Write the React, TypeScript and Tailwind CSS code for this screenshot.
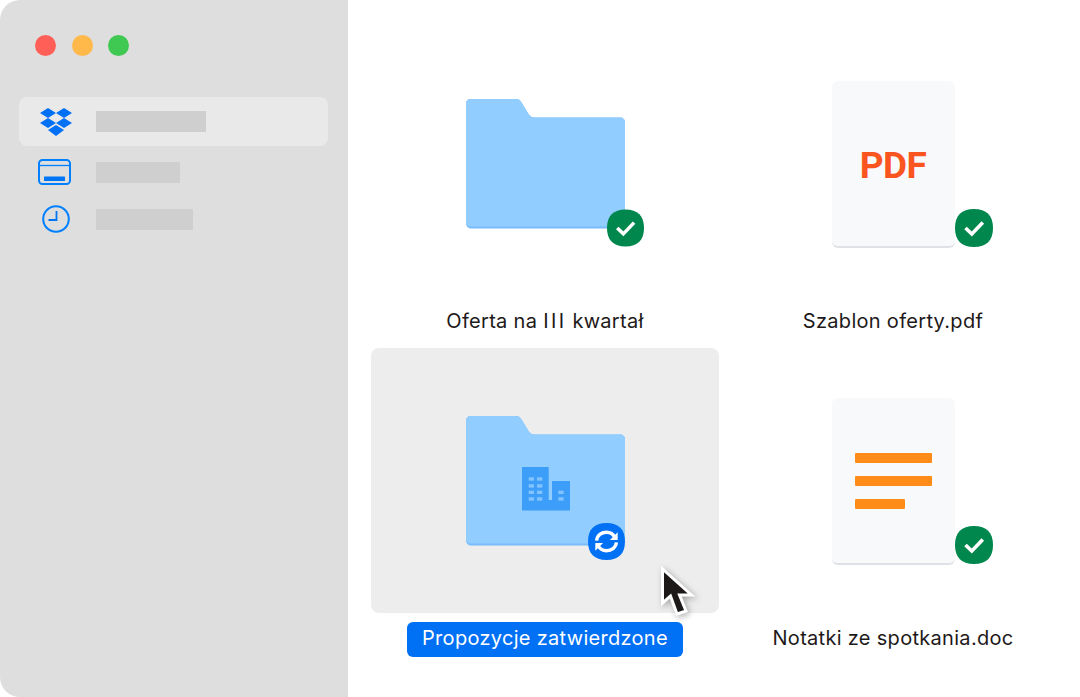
import type { ReactNode } from 'react';

const labelFont = "font-['Inter','Liberation_Sans',sans-serif]";

function FolderIcon({ children }: { children?: ReactNode }) {
  return (
    <svg width="160" height="130" viewBox="0 0 160 130" className="block">
      <path
        d="M5 0H50C52.5 0 54 1 55.2 3L62.5 15C64 17.5 66 18.5 69 18.5H154C157 18.5 159 20.5 159 23.5V124C159 127 157 129.5 154 129.5H5C2 129.5 0 127 0 124V5C0 2 2 0 5 0Z"
        fill="#78bcfb"
      />
      <path
        d="M5 0H50C52.5 0 54 1 55.2 3L62.5 15C64 17.5 66 18.5 69 18.5H154C157 18.5 159 20.5 159 23.5V123C159 126 157 127.5 154 127.5H5C2 127.5 0 126 0 123V5C0 2 2 0 5 0Z"
        fill="#92cdff"
      />
      {children}
    </svg>
  );
}

function BuildingMark() {
  return (
    <g>
      <path d="M56 51H82.7V84H86V65H104V94.5H56Z" fill="#3d9efa" />
      <g fill="#92cdff" opacity="0.8">
        <rect x="62.7" y="61.3" width="5.3" height="3.3" />
        <rect x="71" y="61.3" width="5.3" height="3.3" />
        <rect x="62.7" y="68.3" width="5.3" height="3.3" />
        <rect x="71" y="68.3" width="5.3" height="3.3" />
        <rect x="62.7" y="74.7" width="5.3" height="3.3" />
        <rect x="71" y="74.7" width="5.3" height="3.3" />
        <rect x="62.7" y="81.3" width="5.3" height="3.3" />
        <rect x="71" y="81.3" width="5.3" height="3.3" />
        <rect x="92.3" y="74.7" width="5.3" height="3.3" />
        <rect x="92.3" y="81.3" width="5.3" height="3.3" />
      </g>
    </g>
  );
}

function Badge({ color, children, className }: { color: string; children: ReactNode; className: string }) {
  return (
    <svg viewBox="0 0 38 38" className={className}>
      <path d="M19 0C31.5 0 38 6.5 38 19C38 31.5 31.5 38 19 38C6.5 38 0 31.5 0 19C0 6.5 6.5 0 19 0Z" fill={color} />
      {children}
    </svg>
  );
}

function CheckMark() {
  return <path d="M10.5 19L16.8 25L27.8 13.5" fill="none" stroke="#fff" strokeWidth="3.6" />;
}

function SyncMark() {
  return (
    <g>
      <g fill="none" stroke="#fff" strokeWidth="3.4">
        <path d="M8.8 18C9.3 12.5 14 9.5 19 9.5C23 9.5 26 11.5 27.6 15" />
        <path d="M29.2 20C28.7 25.5 24 28.5 19 28.5C15 28.5 12 26.5 10.4 23" />
      </g>
      <path d="M30.5 9.5V17.5H22.5Z" fill="#fff" />
      <path d="M7.5 28.5V20.5H15.5Z" fill="#fff" />
    </g>
  );
}

function Doc({ children }: { children: ReactNode }) {
  return (
    <div className="flex h-[167px] w-[123px] flex-col items-center rounded-[6px] border-b-2 border-[#dfe1e6] bg-[#f8f9fb]">
      {children}
    </div>
  );
}

function DropboxIcon() {
  return (
    <svg width="32" height="28" viewBox="0 0 32 28" className="block">
      <path
        d="M8 0L16 5L8 10L0 5ZM24 0L32 5L24 10L16 5ZM0 15L8 10L16 15L8 20ZM24 10L32 15L24 20L16 15ZM8 22L16 17L24 22L16 28Z"
        fill="#0070f5"
      />
    </svg>
  );
}

function WindowIcon() {
  return (
    <svg width="33" height="26" viewBox="0 0 33 26" className="mr-[3px] block">
      <rect x="1" y="1" width="31" height="24" rx="3.5" fill="none" stroke="#0080ff" strokeWidth="2" />
      <path d="M1 6.5H32" stroke="#0080ff" strokeWidth="1.3" />
      <rect x="6" y="17.5" width="21" height="4.5" rx="0.5" fill="#0076f5" />
    </svg>
  );
}

function ClockIcon() {
  return (
    <svg width="28" height="28" viewBox="0 0 28 28" className="block">
      <circle cx="14" cy="14" r="12.8" fill="none" stroke="#0080ff" strokeWidth="2" />
      <path d="M14.5 6V15H6.5" fill="none" stroke="#0076f5" strokeWidth="1.8" />
    </svg>
  );
}

function SideRow({ icon, barWidth, active, className }: { icon: ReactNode; barWidth: string; active?: boolean; className: string }) {
  return (
    <div className={`flex items-center rounded-lg ${active ? 'bg-[#e9e9e9]' : ''} ${className}`}>
      <div className="flex w-[74px] justify-center">{icon}</div>
      <div className={`ml-[3px] h-[21px] bg-[#cfcfcf] ${barWidth}`} />
    </div>
  );
}

function Tile({ children, label, selected }: { children: ReactNode; label: ReactNode; selected?: boolean }) {
  return (
    <div className="flex h-[317px] flex-col items-center">
      <div className={`flex h-[265px] w-full items-center justify-center rounded-lg ${selected ? 'bg-[#ededed]' : ''}`}>
        {children}
      </div>
      <div
        className={`mt-[9px] flex h-[35px] items-center whitespace-pre rounded-md px-[15.5px] pb-[3px] text-[20px] tracking-[0.3px] ${labelFont} ${
          selected ? 'bg-[#0070f5] text-white' : 'text-[#1e1919]'
        }`}
      >
        {label}
      </div>
    </div>
  );
}

export default function App() {
  return (
    <div className="relative flex h-[697px] w-[1080px] overflow-hidden bg-white">
      <aside className="w-[348px] rounded-l-[20px] bg-[#dedede] pt-[34.5px]">
        <div className="flex gap-[15.5px] pl-[35px]">
          <span className="h-[21px] w-[21px] rounded-full bg-[#ff5f57]" />
          <span className="h-[21px] w-[21px] rounded-full bg-[#ffb84a]" />
          <span className="h-[21px] w-[21px] rounded-full bg-[#3fc952]" />
        </div>
        <div className="mt-[41.5px] flex flex-col pl-[19px] pr-[20px]">
          <SideRow active icon={<DropboxIcon />} barWidth="w-[110px]" className="h-[49px]" />
          <SideRow icon={<WindowIcon />} barWidth="w-[84px]" className="mt-[5px] h-[42px]" />
          <SideRow icon={<ClockIcon />} barWidth="w-[97px]" className="mt-[5px] h-[42px]" />
        </div>
      </aside>
      <main className="grid flex-1 grid-cols-[348px_348px] content-start pl-[23px] pt-[31px]">
        <Tile
          label={
            <span>
              Oferta na <span className="tracking-[2.4px]">III</span> kwartał
            </span>
          }
        >
          <div className="relative pl-[2px]">
            <FolderIcon />
            <Badge color="#00874d" className="absolute left-[143px] top-[110px] h-[38px] w-[37px]">
              <CheckMark />
            </Badge>
          </div>
        </Tile>
        <Tile label="Szablon oferty.pdf">
          <div className="relative mt-[1px]">
            <Doc>
              <span className="mt-[58px] font-['Roboto',sans-serif] text-[37px] font-bold leading-[54px] tracking-[-0.5px] text-[#fa551e]">
                PDF
              </span>
            </Doc>
            <Badge color="#00874d" className="absolute left-[123px] top-[128px] h-[38px] w-[38px]">
              <CheckMark />
            </Badge>
          </div>
        </Tile>
        <Tile label="Propozycje zatwierdzone" selected>
          <div className="relative pl-[2px]">
            <FolderIcon>
              <BuildingMark />
            </FolderIcon>
            <Badge color="#0070f5" className="absolute left-[124px] top-[107px] h-[37px] w-[37px]">
              <SyncMark />
            </Badge>
          </div>
        </Tile>
        <Tile label="Notatki ze spotkania.doc">
          <div className="relative mt-[1px]">
            <Doc>
              <div className="ml-[23px] mt-[55px] flex w-[77px] flex-col gap-[13px] self-start">
                <div className="h-[10px] w-[77px] rounded-[1px] bg-[#ff8c19]" />
                <div className="h-[10px] w-[77px] rounded-[1px] bg-[#ff8c19]" />
                <div className="h-[10px] w-[50px] rounded-[1px] bg-[#ff8c19]" />
              </div>
            </Doc>
            <Badge color="#00874d" className="absolute left-[123px] top-[128px] h-[38px] w-[38px]">
              <CheckMark />
            </Badge>
          </div>
        </Tile>
      </main>
      <svg
        width="42"
        height="60"
        viewBox="0 0 42 60"
        className="absolute left-[658px] top-[562px] drop-shadow-[2px_2px_3px_rgba(0,0,0,0.3)]"
      >
        <path d="M4.5 7V41L12.5 34L19 52L28 49L21.5 33H33.5Z" fill="#1e1919" stroke="#fff" strokeWidth="3" />
      </svg>
    </div>
  );
}
